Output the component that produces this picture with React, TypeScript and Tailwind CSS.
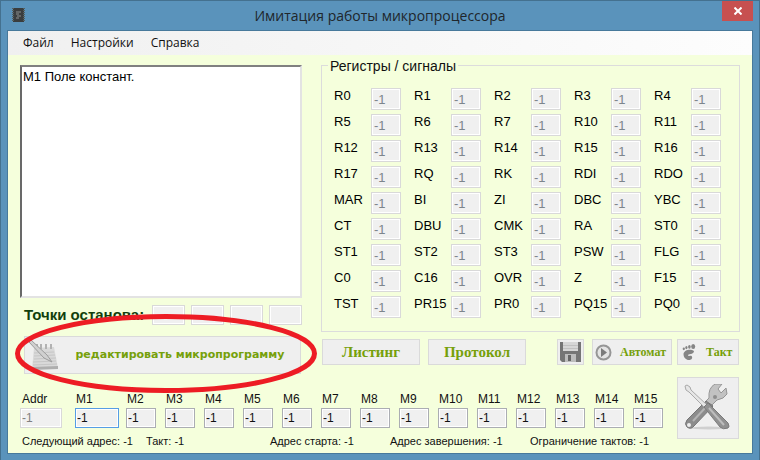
import React from "react";

const registers = [
  "R0", "R1", "R2", "R3", "R4",
  "R5", "R6", "R7", "R10", "R11",
  "R12", "R13", "R14", "R15", "R16",
  "R17", "RQ", "RK", "RDI", "RDO",
  "MAR", "BI", "ZI", "DBC", "YBC",
  "CT", "DBU", "CMK", "RA", "ST0",
  "ST1", "ST2", "ST3", "PSW", "FLG",
  "C0", "C16", "OVR", "Z", "F15",
  "TST", "PR15", "PR0", "PQ15", "PQ0",
];

const microFields = Array.from({ length: 14 }, (_, i) => `M${i + 2}`);

function ChipIcon() {
  return (
    <svg width="13" height="16" viewBox="0 0 13 16" aria-hidden="true">
      <rect x="1" y="1" width="11" height="14" fill="#3a3d3e" />
      <path d="M1 1V15M12 1V15" stroke="#55605f" strokeWidth="2" strokeDasharray="1 1" />
      <path d="M4 5h5M4 7h3M5 9h4M4 11h3" stroke="#8b908e" />
    </svg>
  );
}

function NotepadIcon() {
  return (
    <svg width="34" height="34" viewBox="0 0 34 34" aria-hidden="true">
      <path d="M8 10L28 9L32 30L6 31Z" fill="#d9d9d9" />
      <path d="M6 29L32 28V31L6 32Z" fill="#aeaeae" />
      <path d="M8 15L28 14M8 18L29 17M8 21L30 20M7 24L30 23M7 27L31 26" stroke="#c6c6c6" />
      <path d="M11 6v5M15 6v5M20 6v5M25 6v5" stroke="#b2b2b2" strokeWidth="2" />
      <path d="M3 4L5 2L21 17L26 24L18 20Z" fill="#d0d0d0" stroke="#9c9c9c" />
    </svg>
  );
}

function FloppyIcon() {
  return (
    <svg width="21" height="20" viewBox="0 0 21 20" aria-hidden="true">
      <path d="M0 0H21V20H2L0 18Z" fill="#757575" />
      <rect x="3" y="0" width="15" height="9" fill="#d6d6d6" />
      <path d="M3 3.5H18M3 6.5H18" stroke="#c0c0c0" />
      <rect x="5" y="12" width="11" height="8" fill="#bcbcbc" />
      <rect x="8" y="13" width="3" height="6" fill="#666" />
    </svg>
  );
}

function PlayIcon() {
  return (
    <svg width="17" height="17" viewBox="0 0 17 17" aria-hidden="true">
      <circle cx="8.5" cy="8.5" r="7" fill="#e4e4e4" stroke="#969696" strokeWidth="2" />
      <path d="M6 4L12 8.5L6 13Z" fill="#7b7b7b" />
    </svg>
  );
}

function FootIcon() {
  return (
    <svg width="14" height="16" viewBox="0 0 14 16" fill="#858585" aria-hidden="true">
      <ellipse cx="11.2" cy="2.6" rx="2" ry="2.5" />
      <ellipse cx="7.4" cy="2.8" rx="1.3" ry="1.9" />
      <ellipse cx="4.4" cy="3.6" rx="1.1" ry="1.6" />
      <ellipse cx="1.8" cy="4.8" rx="1.1" ry="1.4" />
      <path d="M12 7C9 4.500 2 5.500 1.500 10C1.500 13.500 4 16 7 16C10 16 11 13.500 9.500 12C8.500 11.200 7 12.500 6 11.500C5.500 9.500 12 11 12 7Z" />
    </svg>
  );
}

function ToolsIcon() {
  return (
    <svg width="48" height="48" viewBox="0 0 48 48" aria-hidden="true">
      <ellipse cx="25" cy="44" rx="19" ry="1.5" fill="#cfcfcf" />
      <path d="M25 14Q24 4 31 0L38 0L34 5L37 9L42 4L43 10Q40 15 33 16L28 21L21 18Z" fill="#c2c2c2" stroke="#959595" />
      <path d="M22 17L29 22L10 42Q7 46 3 43Q0 40 3 36Z" fill="#8c8c8c" stroke="#757575" />
      <path d="M22 23L9 37" stroke="#b4b4b4" strokeWidth="2" />
      <circle cx="5" cy="41" r="2" fill="#eee" />
      <circle cx="31" cy="13" r="2" fill="#8e8e8e" />
      <path d="M1 2L3 1L6 3L7 6L23 21L21 24L5 8L2 6Z" fill="#e6e6e6" stroke="#a9a9a9" />
      <path d="M20 23L24 19L44 39Q46 43 44 44Q39 46 36 43Z" fill="#919191" stroke="#7b7b7b" />
      <path d="M25 24L40 41" stroke="#bdbdbd" strokeWidth="2" />
    </svg>
  );
}

const button =
  "flex items-center border border-[#dadada] bg-[#efefef] font-bold text-[#76a00a]";
const serif = "font-['Liberation_Serif',serif]";

function Field({ name, disabled, wide, focused }: { name: string; disabled?: boolean; wide?: string; focused?: boolean }) {
  const tone = disabled
    ? "border-[#d9d9d9] text-[#808080]"
    : focused
      ? "border-[#569de5] text-[#111]"
      : "border-[#abadb3] text-[#111]";
  return (
    <div className={wide ?? "w-[30px]"}>
      <label htmlFor={name} className={`block h-[18px] text-[12px] leading-[18px] text-[#111] ${disabled ? "pl-[2px]" : "pl-px"}`}>
        {name}
      </label>
      <input
        id={name}
        disabled={disabled}
        defaultValue="-1"
        className={`block h-5 w-full border bg-[#f0f0f0] px-px text-[12px] shadow-[inset_0_0_0_1px_#fff] outline-none ${tone}`}
      />
    </div>
  );
}

export default function App() {
  return (
    <div className="border border-[#44718f] bg-[#5a93bb] px-[6px] pb-[6px] font-['Liberation_Sans',Arial,sans-serif]">
      <header className="flex h-[29px] items-start">
        <div className="flex w-[31px] pt-[6px] pl-[5px]">
          <ChipIcon />
        </div>
        <h1 className="flex-1 text-center font-['Open_Sans',sans-serif] text-[14px] leading-[30px] text-[#20262b]">
          Имитация работы микропроцессора
        </h1>
        <button aria-label="Закрыть" className="flex h-5 w-[31px] items-center justify-center bg-[#c75050]">
          <svg width="8" height="8" viewBox="0 0 8 8" stroke="#fff" strokeWidth="2" aria-hidden="true">
            <path d="M0.5 0.5L7.5 7.5M7.5 0.5L0.5 7.5" />
          </svg>
        </button>
      </header>

      <div className="border border-[#47799b] bg-[#f5ffdc]">
        <nav className="flex h-6 items-center gap-[17px] bg-linear-to-r from-[#f0f0f0] to-[#fdfdfd] pl-[15px] font-['Open_Sans',sans-serif] text-[12px] text-[#111]">
          <button>Файл</button>
          <button>Настройки</button>
          <button>Справка</button>
        </nav>

        <main className="px-3 pt-[10px] pb-1">
          <div className="flex gap-[19px]">
            <section className="w-[282px]">
              <textarea
                aria-label="Микропрограмма"
                defaultValue="M1 Поле констант."
                className="block h-[233px] w-full resize-none border-2 border-t-[#808080] border-r-[#e3e3e3] border-b-[#e3e3e3] border-l-[#696969] bg-white px-px py-[2px] text-[13px] leading-4 text-black outline-none"
              />
              <div className="mt-[7px] flex h-5 items-center gap-[6px]">
                <span className="flex-1 pl-1 text-[15px] leading-5 font-bold whitespace-nowrap text-[#123f0c]">Точки останова:</span>
                {[1, 2, 3, 4].map((n) => (
                  <input
                    key={n}
                    disabled
                    aria-label={`Точка останова ${n}`}
                    className="h-5 w-[33px] border border-[#d9d9d9] bg-[#f0f0f0] shadow-[inset_0_0_0_1px_#fff]"
                  />
                ))}
              </div>
              <div className="relative mt-[11px] ml-1 w-[277px]">
                <button className={`${button} h-[38px] w-full pl-px font-['DejaVu_Sans',sans-serif] text-[11px] whitespace-nowrap`}>
                  <NotepadIcon />
                  <span className="flex-1 text-center">редактировать микропрограмму</span>
                </button>
                <svg className="pointer-events-none absolute -top-[22px] -left-[9px]" width="302" height="79" viewBox="0 0 302 79" fill="none" aria-hidden="true">
                  <ellipse cx="151" cy="39.5" rx="148.5" ry="37" stroke="#ed1c24" strokeWidth="5" />
                </svg>
              </div>
            </section>

            <section className="flex-1">
              <fieldset className="relative h-[267px] border border-[#dcdcdc] pt-[22px] pr-[5px] pl-3">
                <legend className="absolute -top-[10px] left-[6px] bg-[#f5ffdc] px-[2px] text-[14px] leading-5 text-[#111]">
                  Регистры / сигналы
                </legend>
                <div className="grid grid-cols-5 gap-y-1">
                  {registers.map((name) => (
                    <div key={name} className="flex h-[22px]">
                      <label htmlFor={name} className="w-[37px] text-[13px] leading-4 text-black">
                        {name}
                      </label>
                      <input
                        id={name}
                        disabled
                        defaultValue="-1"
                        className="h-[22px] w-[30px] border border-[#d9d9d9] bg-[#f0f0f0] px-[2px] text-[13px] text-[#7d858c] shadow-[inset_0_0_0_1px_#fff]"
                      />
                    </div>
                  ))}
                </div>
              </fieldset>
              <div className="mt-[7px] flex h-[26px] gap-2 pr-px pl-px">
                <button className={`${button} ${serif} w-[98px] justify-center text-[15px]`}>Листинг</button>
                <button className={`${button} ${serif} w-[98px] justify-center text-[15px]`}>Протокол</button>
                <div className="flex-1" />
                <button aria-label="Сохранить" className={`${button} w-[27px] justify-center`}>
                  <FloppyIcon />
                </button>
                <div className="flex gap-[5px]">
                  <button className={`${button} ${serif} w-20 gap-2 pl-[2px] text-[12px]`}>
                    <PlayIcon />
                    Автомат
                  </button>
                  <button className={`${button} ${serif} w-[62px] gap-[10px] pl-1 text-[12px]`}>
                    <FootIcon />
                    Такт
                  </button>
                </div>
              </div>
            </section>
          </div>

          <div className="mt-[3px] flex items-start justify-between pr-px">
            <section className="pt-[13px]">
              <div className="flex gap-[7px]">
                <div className="flex gap-[13px]">
                  <Field name="Addr" disabled wide="w-[42px]" />
                  <Field name="M1" focused wide="w-[44px]" />
                </div>
                <div className="flex gap-[9px]">
                  {microFields.map((name) => (
                    <Field key={name} name={name} />
                  ))}
                </div>
              </div>
              <div className="mt-[5px] grid grid-cols-[124px_124px_120px_140px_auto] pl-[2px] text-[11px] leading-4 whitespace-nowrap text-[#111]">
                <span>Следующий адрес: -1</span>
                <span>Такт: -1</span>
                <span>Адрес старта: -1</span>
                <span>Адрес завершения: -1</span>
                <span>Ограничение тактов: -1</span>
              </div>
            </section>
            <button aria-label="Инструменты" className={`${button} h-[62px] w-[62px] justify-center`}>
              <ToolsIcon />
            </button>
          </div>
        </main>
      </div>
    </div>
  );
}
